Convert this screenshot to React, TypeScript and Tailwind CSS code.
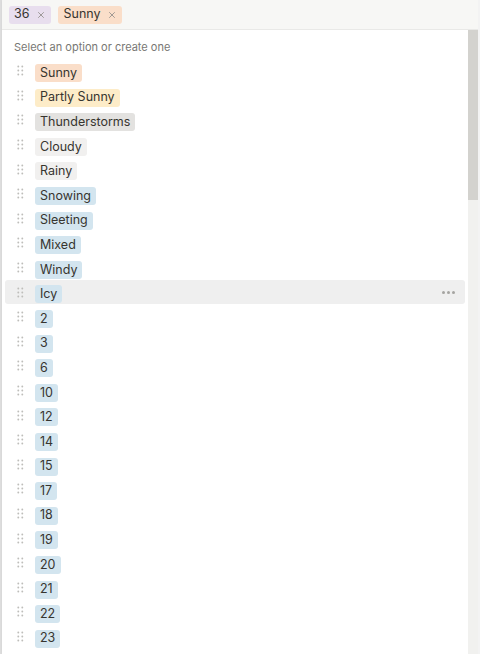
import { X } from "lucide-react";

type Opt = { label: string; tone: string };

const tones: Record<string, string> = {
  orange: "bg-[#fadec9]",
  yellow: "bg-[#fdecc8]",
  gray: "bg-[#e3e2e0]",
  light: "bg-[#f1f0ef]",
  blue: "bg-[#d3e5ef]",
};

const options: Opt[] = [
  { label: "Sunny", tone: "orange" },
  { label: "Partly Sunny", tone: "yellow" },
  { label: "Thunderstorms", tone: "gray" },
  { label: "Cloudy", tone: "light" },
  { label: "Rainy", tone: "light" },
  ...["Snowing", "Sleeting", "Mixed", "Windy", "Icy", "2", "3", "6", "10", "12", "14", "15", "17", "18", "19", "20", "21", "22", "23"].map(
    (label) => ({ label, tone: "blue" })
  ),
];

function Handle() {
  return (
    <svg width="7" height="11" viewBox="0 0 7 11" className="text-[#bebdba]" fill="currentColor">
      {[1.5, 5.5, 9.5].map((y) => (
        <g key={y}>
          <circle cx="1.3" cy={y} r="0.95" />
          <circle cx="5.3" cy={y} r="0.95" />
        </g>
      ))}
    </svg>
  );
}

function Chip({ label, tone, remove }: { label: string; tone: string; remove?: boolean }) {
  return (
    <span
      className={`inline-flex h-[18px] items-center gap-[6px] rounded-[3px] px-[5px] text-[12.5px] leading-none text-[#37352f] ${tones[tone]}`}
    >
      {label}
      {remove && <X size={10} strokeWidth={2} className="text-[#8f8c88]" />}
    </span>
  );
}

export default function App() {
  return (
    <div
      className="flex h-[654px] w-[480px] overflow-hidden bg-white"
      style={{ fontFamily: "Inter, 'Liberation Sans', sans-serif" }}
    >
      <div className="w-[2px] shrink-0 bg-[#dedede]" />
      <div className="flex min-w-0 flex-1 flex-col shadow-[1px_0_3px_rgba(15,15,15,0.12)]">
        <div className="flex h-[30px] shrink-0 items-center gap-[7px] border-b border-[#e9e9e7] bg-[#f7f7f5] pl-[7px]">
          <span className="inline-flex h-[18px] items-center gap-[7px] rounded-[3px] bg-[#e8deee] px-[5px] text-[12.5px] leading-none text-[#37352f]">
            36
            <X size={10} strokeWidth={2} className="text-[#8f8c88]" />
          </span>
          <Chip label="Sunny" tone="orange" remove />
        </div>
        <div className="flex min-h-0 flex-1">
          <div className="flex-1 pl-[3px] pr-[3px]">
            <p className="pl-[9px] pt-[9px] pb-[3px] text-[11px] text-[#787774]">Select an option or create one</p>
            <ul>
              {options.map((o) => (
                <li
                  key={o.label}
                  className={`flex h-[24.6px] items-center rounded-[3px] pl-[12px] pr-[10px] ${
                    o.label === "Icy" ? "bg-[#efefef]" : ""
                  }`}
                >
                  <Handle />
                  <span className="ml-[11px]">
                    <Chip label={o.label} tone={o.tone} />
                  </span>
                  {o.label === "Icy" && (
                    <span className="ml-auto flex gap-[2px]">
                      {[0, 1, 2].map((d) => (
                        <span key={d} className="h-[3px] w-[3px] rounded-full bg-[#a5a4a1]" />
                      ))}
                    </span>
                  )}
                </li>
              ))}
            </ul>
          </div>
          <div className="flex w-[10px] shrink-0 flex-col bg-[#f1f1ef]">
            <div className="h-[170px] bg-[#d3d2ce]" />
          </div>
        </div>
      </div>
      <div className="w-[2px] shrink-0 bg-[#f3f3f3]" />
    </div>
  );
}
